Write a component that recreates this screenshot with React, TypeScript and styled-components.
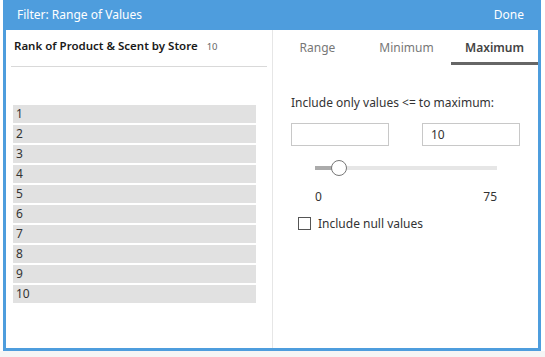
import React from "react";
import styled, { createGlobalStyle } from "styled-components";

const Global = createGlobalStyle`
  html, body { margin: 0; padding: 0; background: #f5f5f5; }
  body { font-family: "Noto Sans", "Open Sans", sans-serif; color: #333; }
  #root { width: 545px; height: 357px; }
`;

const Page = styled.div`
  width: 545px;
  height: 357px;
  padding: 0 4px 6px 3px;
  box-sizing: border-box;
  background: linear-gradient(#fff, #fff) top / 100% 351px no-repeat, #f5f5f5;
`;

const Dialog = styled.div`
  width: 538px;
  height: 351px;
  box-sizing: border-box;
  border: 3px solid #4e9ddd;
  border-top: none;
  background: #fff;
  display: flex;
  flex-direction: column;
`;

const Header = styled.div`
  height: 29px;
  margin: 0 -3px;
  background: #4e9ddd;
  color: #fff;
  display: flex;
  align-items: center;
  justify-content: space-between;
  padding: 0 17px 1px 14px;
  font-size: 12px;
`;

const Body = styled.div`
  flex: 1;
  display: grid;
  grid-template-columns: 267px 1fr;
`;

const LeftPane = styled.div`
  border-right: 1px solid #e6e6e6;
  padding: 8px 5px 0 5px;
`;

const FieldTitle = styled.div`
  display: flex;
  align-items: baseline;
  gap: 9px;
  height: 28px;
  padding-left: 3px;
  border-bottom: 1px solid #d9d9d9;
  font-size: 11.5px;
  font-weight: 600;
  color: #1a1a1a;
`;

const Count = styled.span`
  font-size: 9.5px;
  font-weight: 400;
  color: #666;
`;

const List = styled.div`
  margin-top: 38px;
  display: flex;
  flex-direction: column;
  gap: 2px;
  width: 243px;
  margin-left: 2px;
`;

const Item = styled.div`
  height: 18px;
  background: #e1e1e1;
  font-size: 12px;
  line-height: 18px;
  padding-left: 3px;
  color: #333;
`;

const RightPane = styled.div`
  display: flex;
  flex-direction: column;
`;

const Tabs = styled.div`
  display: grid;
  grid-template-columns: 89px 89px 87px;
  height: 35px;
`;

const Tab = styled.div<{ $active?: boolean }>`
  display: flex;
  align-items: center;
  justify-content: center;
  font-size: 12px;
  padding-top: 2px;
  color: ${(p) => (p.$active ? "#444" : "#777")};
  font-weight: ${(p) => (p.$active ? 600 : 400)};
  border-bottom: 3px solid ${(p) => (p.$active ? "#666" : "transparent")};
`;

const Content = styled.div`
  padding: 29px 0 0 18px;
  display: flex;
  flex-direction: column;
`;

const Prompt = styled.div`
  font-size: 12px;
  color: #333;
  height: 17px;
`;

const Inputs = styled.div`
  margin-top: 12px;
  display: flex;
  gap: 33px;
`;

const Input = styled.div`
  width: 98px;
  height: 23px;
  box-sizing: border-box;
  border: 1px solid #c8c8c8;
  font-size: 12px;
  line-height: 21px;
  padding-left: 8px;
  color: #333;
`;

const SliderRow = styled.div`
  margin-top: 13px;
  height: 18px;
  margin-left: 24px;
  width: 182px;
  position: relative;
  display: flex;
  align-items: center;
`;

const Track = styled.div`
  width: 100%;
  height: 4px;
  background: #e6e6e6;
  position: relative;
`;

const Fill = styled.div`
  height: 100%;
  background: #ababab;
`;

const Thumb = styled.div`
  position: absolute;
  top: 50%;
  width: 14px;
  height: 14px;
  border: 1.5px solid #777;
  border-radius: 50%;
  background: #fff;
  transform: translate(-50%, -50%);
`;

const Ticks = styled.div`
  margin-top: 11px;
  margin-left: 24px;
  width: 182px;
  display: flex;
  justify-content: space-between;
  font-size: 12px;
  color: #333;
`;

const CheckRow = styled.label`
  margin-top: 10px;
  margin-left: 7px;
  display: flex;
  align-items: center;
  gap: 7px;
  font-size: 12px;
  color: #333;
`;

const Box = styled.span`
  width: 13px;
  height: 13px;
  box-sizing: border-box;
  border: 1px solid #555;
  background: #fff;
`;

export default function App() {
  const pct = (10 / 75) * 100;
  return (
    <>
      <Global />
      <Page>
        <Dialog>
          <Header>
            <span>Filter: Range of Values</span>
            <span>Done</span>
          </Header>
          <Body>
            <LeftPane>
              <FieldTitle>
                Rank of Product &amp; Scent by Store <Count>10</Count>
              </FieldTitle>
              <List>
                {Array.from({ length: 10 }, (_, i) => (
                  <Item key={i}>{i + 1}</Item>
                ))}
              </List>
            </LeftPane>
            <RightPane>
              <Tabs>
                <Tab>Range</Tab>
                <Tab>Minimum</Tab>
                <Tab $active>Maximum</Tab>
              </Tabs>
              <Content>
                <Prompt>Include only values &lt;= to maximum:</Prompt>
                <Inputs>
                  <Input />
                  <Input>10</Input>
                </Inputs>
                <SliderRow>
                  <Track>
                    <Fill style={{ width: `${pct}%` }} />
                  </Track>
                  <Thumb style={{ left: `${pct}%` }} />
                </SliderRow>
                <Ticks>
                  <span>0</span>
                  <span>75</span>
                </Ticks>
                <CheckRow>
                  <Box />
                  Include null values
                </CheckRow>
              </Content>
            </RightPane>
          </Body>
        </Dialog>
      </Page>
    </>
  );
}
